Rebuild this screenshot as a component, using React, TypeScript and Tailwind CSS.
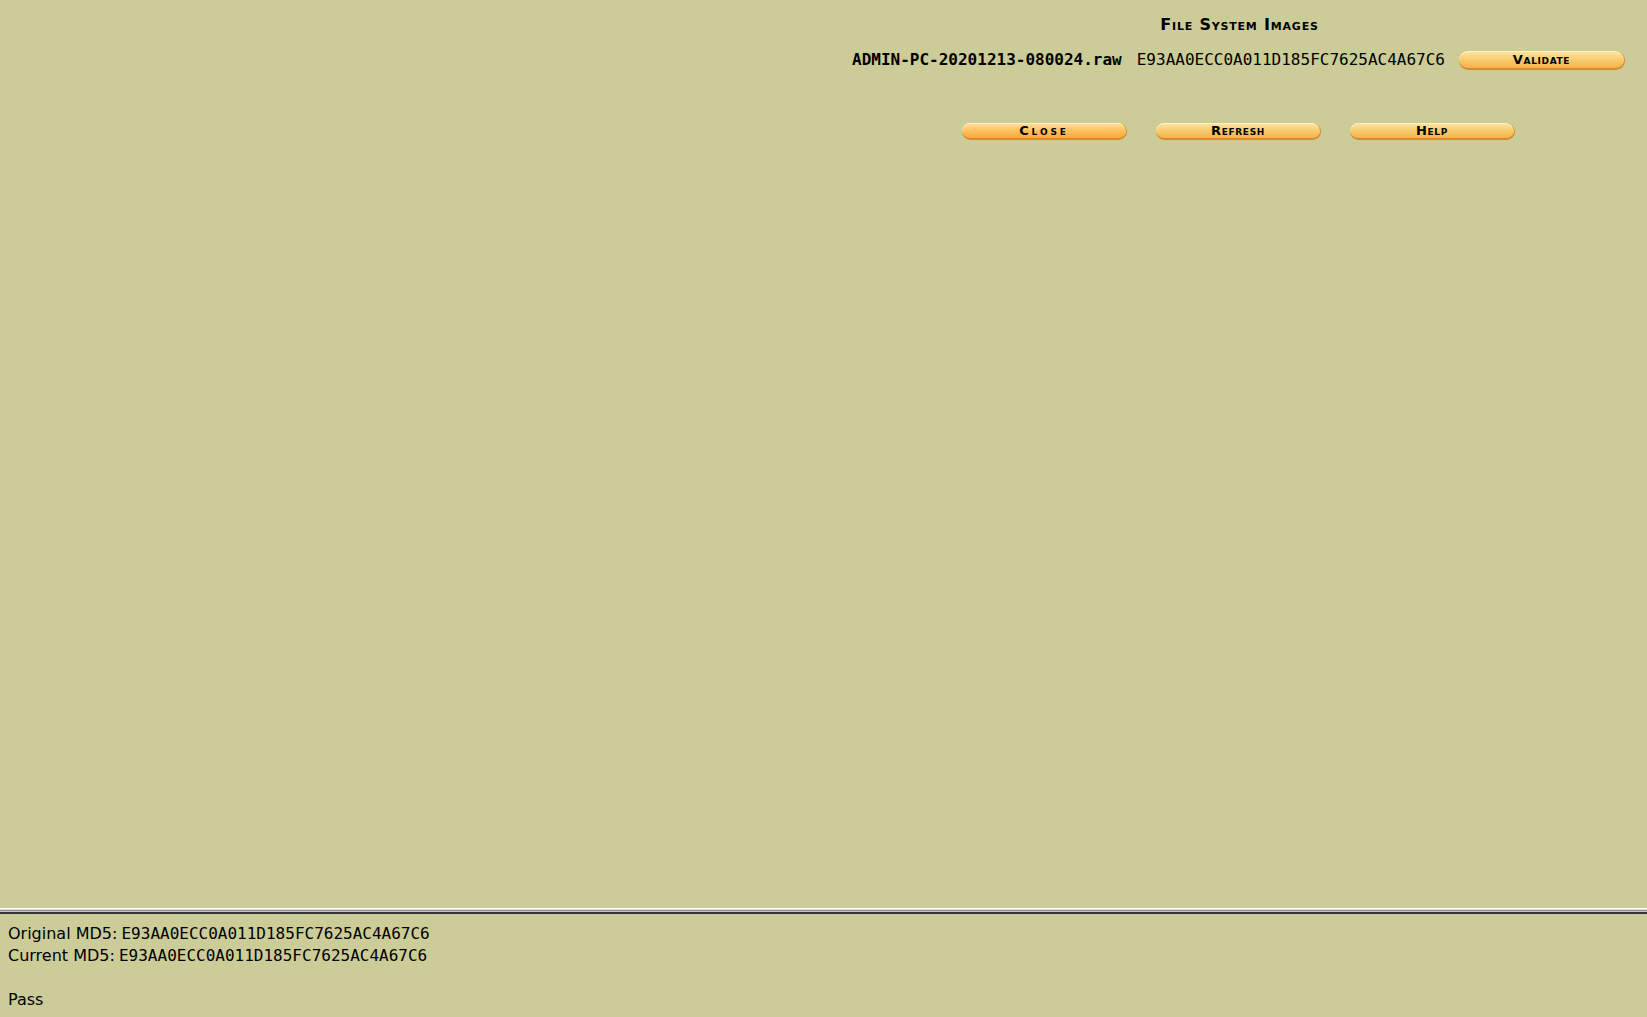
import React from "react";

const HASH = "E93AA0ECC0A011D185FC7625AC4A67C6";

function PillButton({ label, tall, hot, spacing }: { label: string; tall?: boolean; hot?: boolean; spacing?: string }) {
    return (
        <button
            className={
                "rounded-full border-b-2 border-r border-[#d98a2b] flex items-center justify-center font-bold text-black leading-none shadow-[inset_0_1px_0_#fff1c4] " +
                (tall ? "w-[166px] h-[19px] " : "w-[165px] h-[17px] ") +
                (hot
                    ? "bg-[linear-gradient(#ffe0a0,#ffc562_45%,#f8a83e)]"
                    : "bg-[linear-gradient(#fde6a6,#f9cf72_45%,#f2b24e)]")
            }
            style={{
                fontFamily: '"DejaVu Sans", sans-serif',
                fontVariant: "small-caps",
                fontSize: "13px",
                letterSpacing: spacing ?? "0.05em",
            }}
        >
            {label}
        </button>
    );
}

export default function App() {
    return (
        <div className="w-[1647px] h-[1017px] bg-[#cccc99] flex flex-col overflow-hidden text-black">
            {/* upper frame */}
            <div className="h-[908px] flex">
                <div className="w-[832px]" />
                <div className="flex-1 flex flex-col items-center">
                    <h1
                        className="pt-[16px] text-[16px] leading-[18px] font-bold tracking-[0.05em]"
                        style={{ fontFamily: '"DejaVu Sans", sans-serif', fontVariant: "small-caps" }}
                    >
                        File System Images
                    </h1>
                    <div className="mt-[16px] flex items-center h-[20px] mr-[2px]">
                        <span className="font-['DejaVu_Sans_Mono',monospace] font-bold text-[16px]">
                            ADMIN-PC-20201213-080024.raw
                        </span>
                        <span className="ml-[15px] font-['DejaVu_Sans_Mono',monospace] text-[16px]">{HASH}</span>
                        <div className="ml-[14px]">
                            <PillButton label="Validate" tall />
                        </div>
                    </div>
                    <div className="mt-[53px] flex gap-[29px] mr-[2px]">
                        <PillButton label="Close" hot spacing="0.22em" />
                        <PillButton label="Refresh" />
                        <PillButton label="Help" />
                    </div>
                </div>
            </div>

            {/* frame border */}
            <div className="h-px bg-white" />
            <div className="h-px bg-[#e0e0e0]" />
            <div className="h-px bg-[#8a8a8a]" />
            <div className="h-px bg-[#c8c8c8]" />
            <div className="h-[2px] bg-[#333333]" />

            {/* lower frame */}
            <div className="pt-[9px] px-[8px] text-[16px] leading-[22px] font-['DejaVu_Sans',sans-serif]">
                <div>
                    Original MD5: <span className="-ml-[1px] font-['DejaVu_Sans_Mono',monospace]">{HASH}</span>
                </div>
                <div>
                    Current MD5: <span className="-ml-[1px] font-['DejaVu_Sans_Mono',monospace]">{HASH}</span>
                </div>
                <div>&nbsp;</div>
                <div>Pass</div>
            </div>
        </div>
    );
}
